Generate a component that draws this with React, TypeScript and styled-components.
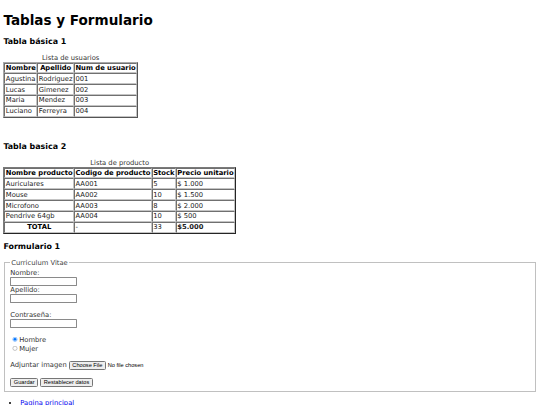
import React from "react";
import styled, { createGlobalStyle } from "styled-components";

const GlobalStyle = createGlobalStyle`
  html {
    zoom: 0.424;
  }
  body {
    font-family: "DejaVu Sans", Verdana, sans-serif;
    color: #000;
    background: #fff;
  }
`;

const Title = styled.h1`
  font-size: 2em;
  margin: 0.6em 0 0.67em;
`;

const SubTitle = styled.h3`
  font-size: 1.17em;
  margin: 1em 0;
`;

const Table = styled.table<{ $thick?: boolean }>`
  border-spacing: 2px;
  border: ${(p) => (p.$thick ? "3px outset #7a7a7a" : "2px outset #a8a8a8")};
  caption {
    color: #333;
  }
`;

const Cell = styled.td`
  padding: 1px;
  border: 2px inset #c4c4c4;
  color: #222;
`;

const HeadCell = styled.th`
  padding: 1px;
  border: 2px inset #c4c4c4;
`;

const Fieldset = styled.fieldset`
  margin: 0 2px;
  padding: 0.35em 0.75em 0.625em;
  border: 2px groove #c0c0c0;
  legend {
    color: #444;
  }
`;

const FieldLabel = styled.label`
  color: #333;
`;

const TextInput = styled.input`
  box-sizing: border-box;
  width: 158px;
  height: 21px;
  border: 1px solid #8a8a8a;
  border-radius: 2px;
`;

const RadioRow = styled.label`
  color: #333;
`;

const LinkList = styled.ul`
  margin: 1em 0;
  padding-left: 40px;
`;

const Link = styled.a`
  color: #0000ee;
`;

const usuarios = [
  ["Agustina", "Rodriguez", "001"],
  ["Lucas", "Gimenez", "002"],
  ["Maria", "Mendez", "003"],
  ["Luciano", "Ferreyra", "004"],
];

const productos = [
  ["Auriculares", "AA001", "5", "$ 1.000"],
  ["Mouse", "AA002", "10", "$ 1.500"],
  ["Microfono", "AA003", "8", "$ 2.000"],
  ["Pendrive 64gb", "AA004", "10", "$ 500"],
];

export default function App() {
  return (
    <>
      <GlobalStyle />
      <Title>Tablas y Formulario</Title>

      <SubTitle>Tabla básica 1</SubTitle>
      <Table>
        <caption>Lista de usuarios</caption>
        <thead>
          <tr>
            <HeadCell>Nombre</HeadCell>
            <HeadCell>Apellido</HeadCell>
            <HeadCell>Num de usuario</HeadCell>
          </tr>
        </thead>
        <tbody>
          {usuarios.map((u) => (
            <tr key={u[2]}>
              {u.map((v) => (
                <Cell key={v}>{v}</Cell>
              ))}
            </tr>
          ))}
        </tbody>
      </Table>
      <br />
      <br />

      <SubTitle>Tabla basica 2</SubTitle>
      <Table $thick>
        <caption>Lista de producto</caption>
        <thead>
          <tr>
            <HeadCell>Nombre producto</HeadCell>
            <HeadCell>Codigo de producto</HeadCell>
            <HeadCell>Stock</HeadCell>
            <HeadCell>Precio unitario</HeadCell>
          </tr>
        </thead>
        <tbody>
          {productos.map((p) => (
            <tr key={p[1]}>
              {p.map((v, i) => (
                <Cell key={i}>{v}</Cell>
              ))}
            </tr>
          ))}
          <tr>
            <HeadCell>TOTAL</HeadCell>
            <Cell>-</Cell>
            <Cell>33</Cell>
            <Cell>
              <b>$5.000</b>
            </Cell>
          </tr>
        </tbody>
      </Table>

      <SubTitle>Formulario 1</SubTitle>
      <form onSubmit={(e) => e.preventDefault()}>
        <Fieldset>
          <legend>Curriculum Vitae</legend>
          <FieldLabel htmlFor="nombre">Nombre:</FieldLabel>
          <br />
          <TextInput id="nombre" type="text" />
          <br />
          <FieldLabel htmlFor="apellido">Apellido:</FieldLabel>
          <br />
          <TextInput id="apellido" type="text" />
          <br />
          <br />
          <FieldLabel htmlFor="pass">Contraseña:</FieldLabel>
          <br />
          <TextInput id="pass" type="password" />
          <br />
          <br />
          <RadioRow>
            <input type="radio" name="sexo" defaultChecked />
            Hombre
          </RadioRow>
          <br />
          <RadioRow>
            <input type="radio" name="sexo" />
            Mujer
          </RadioRow>
          <br />
          <br />
          <FieldLabel htmlFor="foto">Adjuntar imagen </FieldLabel>
          <input id="foto" type="file" />
          <br />
          <br />
          <button type="submit">Guardar</button>{" "}
          <button type="reset">Restablecer datos</button>
        </Fieldset>
      </form>

      <LinkList>
        <li>
          <Link href="#">Pagina principal</Link>
        </li>
      </LinkList>
    </>
  );
}
